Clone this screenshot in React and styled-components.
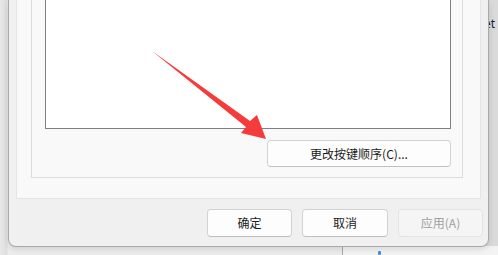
import React from "react";
import styled, { createGlobalStyle } from "styled-components";

const Global = createGlobalStyle`
  html, body { margin: 0; padding: 0; }
  body {
    width: 498px;
    height: 255px;
    overflow: hidden;
    background: #e9e9e9;
    font-family: "Noto Sans CJK SC", "Noto Sans", sans-serif;
  }
`;

const Desktop = styled.div`
  position: relative;
  width: 498px;
  height: 255px;
  overflow: hidden;
  display: flex;
  align-items: flex-start;
  padding-left: 8px;
  box-sizing: border-box;
  background: linear-gradient(to right, #e8e8e8 0px, #dedede 7px, #ececec 8px);
`;

const BackWindow = styled.div`
  position: absolute;
  left: 484px;
  top: 0;
  width: 20px;
  height: 246px;
  background: #dadada;
  font-size: 12px;
  color: #1e1e1e;
  font-family: "Noto Sans", "DejaVu Sans", sans-serif;
  padding-top: 15px;
  box-sizing: border-box;
  z-index: 0;
`;

const BackTaskbar = styled.div`
  position: absolute;
  left: 342px;
  top: 246px;
  width: 160px;
  height: 12px;
  background: #f3f3f3;
  border-left: 1px solid #a9a9a9;
  z-index: 0;
`;

const BlueDot = styled.span`
  position: absolute;
  left: 35px;
  top: 5px;
  width: 3px;
  height: 4px;
  border-radius: 1px;
  background: #4a8fd8;
`;

const Window = styled.div`
  position: relative;
  z-index: 1;
  width: 481px;
  height: 247px;
  box-sizing: border-box;
  background: #f0f0f0;
  border: 1px solid #a9a9a9;
  border-top: none;
  border-radius: 0 0 8px 8px;
  box-shadow: 0 2px 6px rgba(0, 0, 0, 0.12);
  display: flex;
  flex-direction: column;
`;

const TabPanel = styled.div`
  margin-left: 7px;
  width: 465px;
  height: 199px;
  box-sizing: border-box;
  background: #f9f9f9;
  border: 1px solid #e4e4e4;
  border-top: none;
  padding-left: 14px;
`;

const GroupBox = styled.div`
  width: 432px;
  height: 178px;
  box-sizing: border-box;
  border: 1px solid #dcdcdc;
  border-top: none;
  padding-left: 13px;
  display: flex;
  flex-direction: column;
  align-items: flex-start;
`;

const ListBox = styled.div`
  width: 406px;
  height: 129px;
  box-sizing: border-box;
  background: #ffffff;
  border: 1px solid #808080;
  border-top: none;
`;

const ListActions = styled.div`
  width: 406px;
  display: flex;
  justify-content: flex-end;
  margin-top: 11px;
`;

const Button = styled.button`
  width: ${(p) => p.$w || 85}px;
  height: ${(p) => p.$h || 28}px;
  box-sizing: border-box;
  padding: 0;
  margin: 0;
  border-radius: 4px;
  border: 1px solid ${(p) => (p.disabled ? "#e3e3e3" : "#d2d2d2")};
  border-bottom-color: ${(p) => (p.disabled ? "#e3e3e3" : "#c0c0c0")};
  background: ${(p) => (p.disabled ? "#f5f5f5" : "#fdfdfd")};
  color: ${(p) => (p.disabled ? "#a0a0a0" : "#1b1b1b")};
  font-family: "Noto Sans CJK SC", "Noto Sans", sans-serif;
  font-size: 12px;
  line-height: 1;
  display: flex;
  align-items: center;
  justify-content: center;
`;

const ButtonRow = styled.div`
  margin-top: 10px;
  padding-right: 5px;
  display: flex;
  justify-content: flex-end;
  gap: 10px;
`;

const ArrowLayer = styled.svg`
  position: absolute;
  left: 0;
  top: 0;
  z-index: 5;
  pointer-events: none;
`;

export default function App() {
  return (
    <>
      <Global />
      <Desktop>
        <BackWindow>et</BackWindow>
        <BackTaskbar>
          <BlueDot />
        </BackTaskbar>
        <Window>
          <TabPanel>
            <GroupBox>
              <ListBox />
              <ListActions>
                <Button $w={184} $h={27}>更改按键顺序(C)...</Button>
              </ListActions>
            </GroupBox>
          </TabPanel>
          <ButtonRow>
            <Button>确定</Button>
            <Button $w={86}>取消</Button>
            <Button disabled>应用(A)</Button>
          </ButtonRow>
        </Window>
        <ArrowLayer width="498" height="255" viewBox="0 0 498 255">
          <polygon
            points="152,51 250,121 257,115 266,139 241,133 246,127"
            fill="#f53b3b"
          />
        </ArrowLayer>
      </Desktop>
    </>
  );
}
